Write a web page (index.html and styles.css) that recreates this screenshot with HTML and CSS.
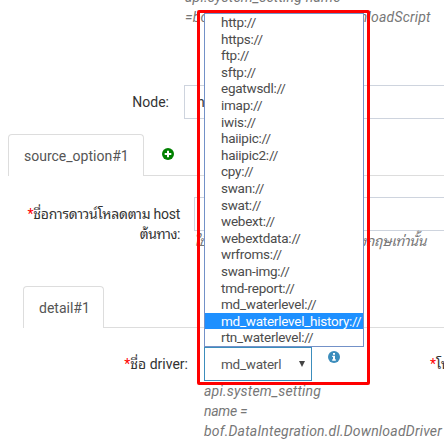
FILE: index.html
```html
<!DOCTYPE html>
<html lang="th">
<head>
<meta charset="utf-8">
<title>Download settings</title>
<link rel="stylesheet" href="styles.css">
</head>
<body>
<main class="page">
  <div class="row script-help">
    <p class="help"><span class="t-sys">api.system_setting name</span><br><span class="t-script">=bof.DataIntegration.dl.DownloadScript</span></p>
  </div>
  <div class="row node-row">
    <label class="label"><span class="t-node">Node:</span></label>
    <div class="input">haii</div>
  </div>
  <nav class="tabs">
    <div class="tab"><span class="t-source">source_option#1</span></div>
    <svg class="add" viewBox="0 0 12 12"><circle cx="6" cy="6" r="6"/><path d="M6 2.7v6.6M2.7 6h6.6"/></svg>
  </nav>
  <section class="source">
    <div class="row host-row">
      <label class="label"><span class="t-host"><b>*</b>ชื่อการดาวน์โหลดตาม host</span><br><span class="t-origin">ต้นทาง:</span></label>
      <div class="field"><div class="input"></div><p class="help hint">ใช้ตั้งชื่อไฟล์ ตัวอักษรภาษาอังกฤษเท่านั้น</p></div>
    </div>
    <nav class="tabs inner">
      <div class="tab"><span class="t-detail">detail#1</span></div>
    </nav>
    <div class="row driver-row">
      <label class="label"><span class="t-driver"><b>*</b>ชื่อ driver:</span></label>
      <div class="field">
        <div class="control">
          <div class="select"><span class="value"><span class="t-value">md_waterlevel_history://</span></span><i class="arrow"></i></div>
          <svg class="info" viewBox="0 0 12 12"><circle cx="6" cy="6" r="6"/><path d="M5 2h2v1.7H5zM4.2 4.7H7v3.6h.8v1.4H4.2V8.3H5V6h-.8z"/></svg>
          <span class="next"><b>*</b>โฟลเดอร์</span>
          <ul class="options">
            <li><span>http://</span></li><li><span>https://</span></li><li><span>ftp://</span></li><li><span>sftp://</span></li><li><span>egatwsdl://</span></li><li><span>imap://</span></li><li><span>iwis://</span></li><li><span>haiipic://</span></li><li><span>haiipic2://</span></li><li><span>cpy://</span></li><li><span>swan://</span></li><li><span>swat://</span></li><li><span>webext://</span></li><li><span>webextdata://</span></li><li><span>wrfroms://</span></li><li><span>swan-img://</span></li><li><span>tmd-report://</span></li><li><span>md_waterlevel://</span></li><li class="active"><span>md_waterlevel_history://</span></li><li><span>rtn_waterlevel://</span></li>
          </ul>
          <div class="highlight"></div>
        </div>
        <p class="help"><span class="t-h1">api.system_setting</span><br><span class="t-h2">name =</span><br><span class="t-h3">bof.DataIntegration.dl.DownloadDriver</span></p>
      </div>
    </div>
  </section>
</main>
</body>
</html>
```
FILE: styles.css
```css
* { box-sizing: border-box; }
body { margin: 0; background: #fff; color: #333; font: 14px/20px Roboto, "Noto Sans Thai Looped", Loma, Waree, "Noto Sans Thai", "Noto Sans", sans-serif; }
p, ul { margin: 0; padding: 0; }
.page { width: 444px; height: 440px; overflow: hidden; display: flex; flex-direction: column; }
.row { display: flex; flex: none; white-space: nowrap; }
.label { flex: none; text-align: right; }
.label b, .next b { color: #f00; font-weight: 400; }
.help { color: #777; font-style: italic; white-space: nowrap; letter-spacing: .2px; }
.script-help { margin: -13px 0 0 185px; }
.node-row { margin-top: 58px; }
.node-row .label { width: 169px; margin-right: 15px; padding-top: 7px; }
.input { flex: 1; height: 34px; padding: 6px 12px; border: 1px solid #ced4de; border-right: 0; }
.tabs { display: flex; flex: none; height: 42px; margin: 15px 0 0 8px; box-shadow: inset 0 -1px #ddd; }
.tab { width: 136px; height: 42px; padding: 11px 15px; border: 1px solid #ddd; border-bottom: 0; border-radius: 4px 4px 0 0; background: #fff; color: #555; }
.add { width: 12px; height: 12px; margin: 14px 0 0 18px; fill: #008000; }
.add path { stroke: #fff; stroke-width: 2; }
.source { margin-top: 21px; }
.host-row .label { width: 180px; margin-right: 14px; padding-top: 7px; }
.t-host { letter-spacing: -.26px; }
.t-origin { letter-spacing: -.5px; }
.field { flex: 1; min-width: 0; }
.hint { width: 232px; font-size: 14px; letter-spacing: -.4px; text-align-last: justify; }
.inner { margin: 35px 0 0 23px; }
.inner .tab { width: 81px; }
.driver-row { margin-top: 19px; }
.driver-row .label { width: 188px; margin-right: 16px; padding-top: 7px; }
.control { position: relative; display: flex; height: 34px; }
.select { display: flex; flex: none; align-items: center; width: 108px; height: 34px; padding-left: 16px; border: 1px solid #3c8dbc; color: #555; font-size: 13.5px; letter-spacing: -.25px; }
.value { width: 60px; overflow: hidden; }
.arrow { margin-left: 18px; border: 3px solid transparent; border-top: 6px solid #444; border-bottom: 0; }
.info { flex: none; width: 12px; height: 12px; margin: 4px 0 0 16px; fill: #3c8dbc; }
.info path { fill: #fff; }
.next { flex: none; margin: 7px 0 0 90px; }
.t-h1 { letter-spacing: .2px; }
.t-h2 { letter-spacing: -.3px; }
.options { position: absolute; left: 0; bottom: 34px; width: 160px; height: 334px; border: 1px solid #7391c8; background: #fff; color: #4c4c4c; font-size: 13.5px; letter-spacing: -.25px; list-style: none; }
.options li { height: 16.6px; padding-left: 16px; line-height: 16.6px; }
.options .active { background: #1e90ff; color: #fff; }
.highlight { position: absolute; left: -7px; top: -337px; width: 173px; height: 375px; border: 3px solid #f00; border-radius: 2px; }
```
